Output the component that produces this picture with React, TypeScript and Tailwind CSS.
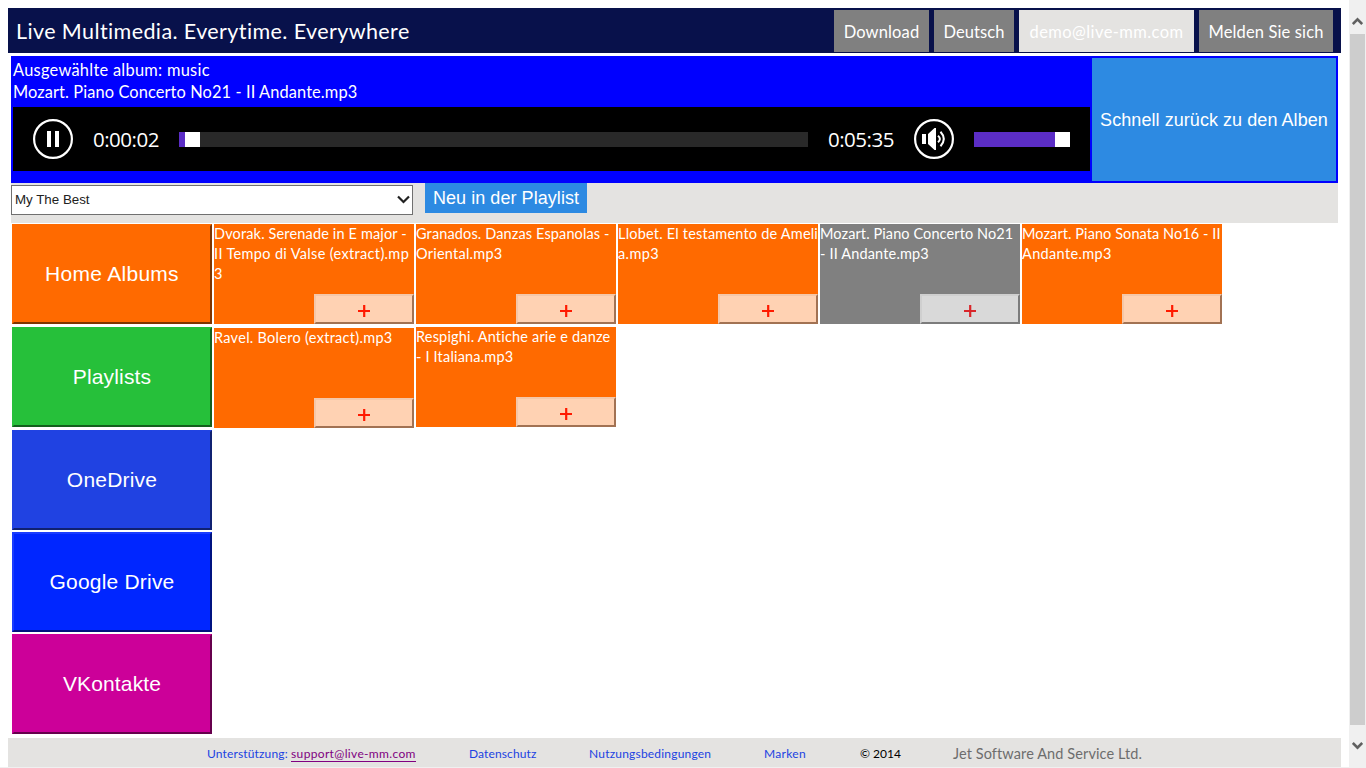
import React from "react";

type Line = { text: string; track: string };
type Track = { lines: Line[]; selected?: boolean; lower?: boolean };

const navItems = [
  { label: "Download", cls: "w-[95px] bg-[#808080] tracking-[0.15px]" },
  { label: "Deutsch", cls: "w-20 bg-[#808080] tracking-[0.1px]" },
  { label: "demo@live-mm.com", cls: "w-[175px] bg-[#e4e3e1] tracking-[0.4px]" },
  { label: "Melden Sie sich", cls: "w-[134px] bg-[#808080] tracking-[0.13px]" },
];

const sources = [
  { label: "Home Albums", cls: "mb-[3px] tracking-[0.28px] bg-[#ff6a00] border-t-[#ff6a00] border-l-[#ff6a00] border-r-[#803500] border-b-[#803500]" },
  { label: "Playlists", cls: "mb-[3px] tracking-[0.15px] bg-[#26c03a] border-t-[#26c03a] border-l-[#26c03a] border-r-[#13601d] border-b-[#13601d]" },
  { label: "OneDrive", cls: "mb-[2px] tracking-[0.2px] bg-[#2042e2] border-t-[#2042e2] border-l-[#2042e2] border-r-[#102171] border-b-[#102171]" },
  { label: "Google Drive", cls: "mb-[2px] tracking-[0.2px] bg-[#0026ff] border-t-[#1a3cff] border-l-[#1a3cff] border-r-[#001380] border-b-[#001380]" },
  { label: "VKontakte", cls: "tracking-[0.15px] bg-[#cc0099] border-t-[#cc0099] border-l-[#cc0099] border-r-[#66004c] border-b-[#66004c]" },
];

const rows: Track[][] = [
  [
    {
      lines: [
        { text: "Dvorak. Serenade in E major -", track: "tracking-[0.15px]" },
        { text: "II Tempo di Valse (extract).mp", track: "tracking-[0.34px]" },
        { text: "3", track: "tracking-[0px]" },
      ],
    },
    {
      lines: [
        { text: "Granados. Danzas Espanolas -", track: "tracking-[0.13px]" },
        { text: "Oriental.mp3", track: "tracking-[0.24px]" },
      ],
    },
    {
      lines: [
        { text: "Llobet. El testamento de Ameli", track: "tracking-[0.2px]" },
        { text: "a.mp3", track: "tracking-[0.4px]" },
      ],
    },
    {
      selected: true,
      lines: [
        { text: "Mozart. Piano Concerto No21", track: "tracking-[0.1px]" },
        { text: "- II Andante.mp3", track: "tracking-[0.16px]" },
      ],
    },
    {
      lines: [
        { text: "Mozart. Piano Sonata No16 - II", track: "tracking-[0.08px]" },
        { text: "Andante.mp3", track: "tracking-[0.35px]" },
      ],
    },
  ],
  [
    { lower: true, lines: [{ text: "Ravel. Bolero (extract).mp3", track: "tracking-[0.29px]" }] },
    {
      lines: [
        { text: "Respighi. Antiche arie e danze", track: "tracking-[0.18px]" },
        { text: "- I Italiana.mp3", track: "tracking-[0.18px]" },
      ],
    },
  ],
];

function TrackTile({ track }: { track: Track }) {
  return (
    <div
      className={`flex h-[100px] w-[200px] flex-col justify-between ${track.lower ? "mt-px" : ""} ${
        track.selected ? "bg-[#808080]" : "bg-[#ff6a00]"
      }`}
    >
      <div className="flex flex-col items-start text-[14.5px] leading-[20px] text-white">
        {track.lines.map((l) => (
          <span key={l.text} className={`whitespace-pre ${l.track}`}>
            {l.text}
          </span>
        ))}
      </div>
      <button
        className={`flex h-[30px] w-[100px] items-center justify-center self-end border-2 ${
          track.selected
            ? "border-t-[#cfcfcf] border-l-[#cfcfcf] border-r-[#7c7c7c] border-b-[#7c7c7c] bg-[#d9d9d9] text-[#d9262a]"
            : "border-t-[#f5c7a8] border-l-[#f5c7a8] border-r-[#a27253] border-b-[#a27253] bg-[#ffd2b3] text-[#ff1a00]"
        }`}
      >
        <svg width="12" height="12" viewBox="0 0 12 12" className="mt-1">
          <path d="M6.200 0v12M0 6h12" stroke="currentColor" strokeWidth="2.200" />
        </svg>
      </button>
    </div>
  );
}

export default function App() {
  return (
    <div className="flex h-[768px] w-[1366px] overflow-hidden bg-white font-['Lato','Liberation_Sans',sans-serif]">
      <div className="flex w-[1349px] flex-col pt-2">
        <header className="ml-2 flex h-[45px] w-[1333px] justify-between bg-[#08114b] pt-[2px] pr-2 pb-px pl-2 text-white">
          <h1 className="text-[21.5px] leading-[43px] tracking-[0.4px] whitespace-nowrap">Live Multimedia. Everytime. Everywhere</h1>
          <nav className="flex gap-[5px]">
            {navItems.map((n) => (
              <a key={n.label} className={`flex h-[42px] items-center justify-center pt-[2px] text-[16.5px] whitespace-nowrap ${n.cls}`}>
                {n.label}
              </a>
            ))}
          </nav>
        </header>

        <section className="mt-[3px] ml-[11px] flex h-[127px] w-[1327px] gap-[2px] bg-[#0000ff] p-[2px]">
          <div className="flex w-[1077px] flex-col text-white">
            <div className="mt-px text-[16.4px] leading-[22px] tracking-[0.27px] whitespace-nowrap">Ausgewählte album: music</div>
            <div className="text-[16.4px] leading-[22px] tracking-[0.1px] whitespace-nowrap">Mozart. Piano Concerto No21 - II Andante.mp3</div>
            <div className="mt-1 flex h-16 items-center bg-black pl-5">
              <svg width="40" height="40" viewBox="0 0 40 40" fill="none" className="shrink-0">
                <circle cx="20" cy="20" r="18.900" stroke="white" strokeWidth="2.200" />
                <path d="M14 12h4v16h-4zM22 12h4v16h-4z" fill="white" />
              </svg>
              <span className="ml-5 w-[66px] font-['Open_Sans','Noto_Sans',sans-serif] text-[20.5px] tracking-[-0.5px] whitespace-nowrap">0:00:02</span>
              <div className="ml-5 flex h-[15px] w-[629px] bg-[#292929]">
                <div className="w-[6px] bg-[#5b2dc5]" />
                <div className="w-[15px] bg-white" />
              </div>
              <span className="ml-5 w-[66px] font-['Open_Sans','Noto_Sans',sans-serif] text-[20.5px] tracking-[-0.5px] whitespace-nowrap">0:05:35</span>
              <svg width="40" height="40" viewBox="0 0 40 40" fill="none" className="ml-5 shrink-0">
                <circle cx="20" cy="20" r="18.900" stroke="white" strokeWidth="2.200" />
                <path d="M8 15h4v10H8zM14 15L20.500 9H22v22h-1.500L14 25z" fill="white" />
                <path d="M24 16.800q3.800 3.200 0 6.400M26.500 12.800q6.600 7.200 0 14.400" stroke="white" strokeWidth="2" />
              </svg>
              <div className="ml-5 flex h-[15px] w-24">
                <div className="w-[81px] bg-[#5b2dc5]" />
                <div className="w-[15px] bg-white" />
              </div>
            </div>
          </div>
          <button className="flex h-[123px] w-[244px] items-center justify-center bg-[#2d8ae2] pt-[2px] font-['Liberation_Sans',sans-serif] text-[18px] tracking-[0.06px] whitespace-nowrap text-white">
            Schnell zurück zu den Alben
          </button>
        </section>

        <section className="ml-[11px] flex h-10 w-[1327px] items-start bg-[#e4e3e1] font-['Liberation_Sans',sans-serif]">
          <div className="mt-[2px] flex h-[30px] w-[402px] items-center justify-between border border-[#707070] bg-white pr-[2px] pl-[3px] text-[13.333px] text-[#212121]">
            <span className="-mt-px whitespace-nowrap">My The Best</span>
            <svg width="13" height="9" viewBox="0 0 13 9" fill="none" className="-mt-[2px]">
              <path d="M1 1.500l5.500 5.500L12 1.500" stroke="#212121" strokeWidth="2.200" />
            </svg>
          </div>
          <button className="ml-3 flex h-[30px] w-[162px] items-center justify-center bg-[#2d8ae2] text-[18px] tracking-[0.06px] whitespace-nowrap text-white">
            Neu in der Playlist
          </button>
        </section>

        <main className="mt-px ml-3 flex h-[514px] gap-[2px]">
          <aside className="flex w-[200px] flex-col font-['Liberation_Sans',sans-serif] text-[21px] text-white">
            {sources.map((s) => (
              <button key={s.label} className={`flex h-[100px] w-[200px] shrink-0 items-center justify-center border-2 ${s.cls}`}>
                {s.label}
              </button>
            ))}
          </aside>
          <div className="flex flex-col gap-[3px]">
            {rows.map((row, i) => (
              <div key={i} className="flex items-start gap-[2px]">
                {row.map((t) => (
                  <TrackTile key={t.lines[0].text} track={t} />
                ))}
              </div>
            ))}
          </div>
        </main>

        <footer className="ml-2 flex h-[29px] w-[1333px] shrink-0 items-center bg-[#e4e3e1] pt-[2px] pl-[199px] text-[12px] whitespace-nowrap text-[#2042e2]">
          <div className="w-[262px] tracking-[0.15px]">
            Unterstützung: <a className="border-b border-[#800080] tracking-[0.34px] text-[#800080]">support@live-mm.com</a>
          </div>
          <a className="w-[120px] tracking-[0.12px]">Datenschutz</a>
          <a className="w-[175px] tracking-[0.2px]">Nutzungsbedingungen</a>
          <a className="w-24 tracking-[0.3px]">Marken</a>
          <span className="w-[93px] text-black">© 2014</span>
          <span className="text-[14.5px] tracking-[0.1px] text-[#6d6d6d]">Jet Software And Service Ltd.</span>
        </footer>
        <div className="h-px shrink-0 bg-[#f0f0f0]" />
      </div>

      <div className="flex w-[17px] flex-col items-center bg-[#f0f0f0]">
        <div className="flex h-[34px] items-end pb-[9px]">
          <svg width="11" height="8" viewBox="0 0 11 8" fill="none">
            <path d="M0.800 7L5.500 2.300L10.200 7" stroke="#606060" strokeWidth="2.600" />
          </svg>
        </div>
        <div className="h-[691px] w-[15px] bg-[#cdcdcd]" />
        <svg width="11" height="8" viewBox="0 0 11 8" fill="none" className="mt-[17px]">
          <path d="M0.800 1L5.500 5.700L10.200 1" stroke="#606060" strokeWidth="2.600" />
        </svg>
      </div>
    </div>
  );
}
